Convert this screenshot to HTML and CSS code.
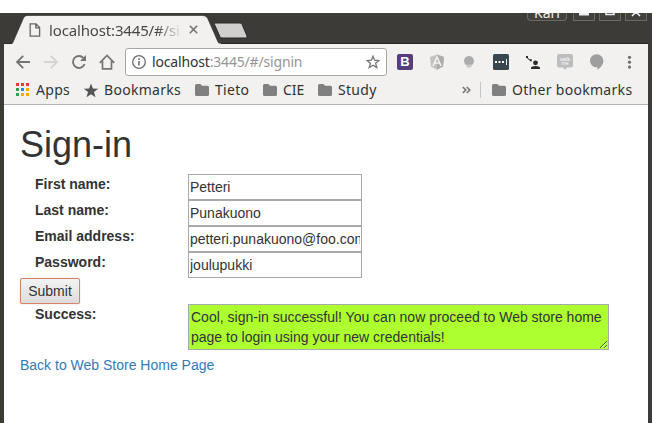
FILE: index.html
```html
<!DOCTYPE html>
<html lang="en">
<head>
<meta charset="utf-8">
<title>Sign-in</title>
<link rel="stylesheet" href="styles.css">
</head>
<body>
<div class="window">
  <header class="titlebar">
    <div class="tab">
      <svg class="tab-shape" width="218" height="30" viewBox="0 0 218 30"><path d="M1 29.500 12.500 3Q13.500 .5 16 .5H192Q195 .5 196.500 3L207 27Q208 29 210 29.500Z" fill="#f2f1ef" stroke="#282824" stroke-width=".6"/><path d="M1 29.500H210" stroke="#f2f1ef" stroke-width="2"/></svg>
      <div class="tab-body">
        <svg width="12" height="14" viewBox="0 0 12 14" fill="none" stroke="#666" stroke-width="1.300"><path d="M1.200.8H7L10.600 4.600V13.200H1.200ZM6.800.8V4.900H10.600"/></svg>
        <span class="tab-title">localhost:3445/#/si</span>
        <svg width="9" height="9" viewBox="0 0 9 9" stroke="#757575" stroke-width="1.600"><path d="M.8.8 8.200 8.200M8.200.8.8 8.200"/></svg>
      </div>
    </div>
    <svg class="newtab" width="35" height="17" viewBox="0 0 35 17"><path d="M2.500 1H27Q28.500 1 29 2.200L34 14Q34.600 16 33 16H9Q7.500 16 7 14.800L1.500 2.500Q1 1 2.500 1Z" fill="#d0cfcd" stroke="#292925"/></svg>
    <div class="controls">
      <span class="user"><span>Kari</span></span>
      <span class="ctl"><svg width="10" height="8"><path d="M0 1H10" stroke="#eee" stroke-width="3"/></svg></span>
      <span class="ctl"><svg width="10" height="8"><path d="M1-5H9V1.500H1Z" fill="none" stroke="#eee" stroke-width="1.600"/></svg></span>
      <span class="ctl"><svg width="10" height="8"><path d="M0-6 9 3M10-6 1 3" fill="none" stroke="#eee" stroke-width="1.600"/></svg></span>
    </div>
  </header>
  <nav class="toolbar">
    <span class="nav"><svg width="16" height="16" viewBox="0 0 16 16" fill="none" stroke="#757575" stroke-width="1.800"><path d="M15 8H2.500M8.200 1.800 2 8 8.200 14.200"/></svg></span>
    <span class="nav"><svg width="16" height="16" viewBox="0 0 16 16" fill="none" stroke="#d5d4d2" stroke-width="1.800"><path d="M1 8H13.500M7.800 1.800 14 8 7.800 14.200"/></svg></span>
    <span class="nav"><svg width="16" height="16" viewBox="0 0 16 16" fill="none" stroke="#757575" stroke-width="1.900"><path d="M13.600 10A6 6 0 1 1 12.300 3.800L13.500 5"/><path d="M15 1V7H9Z" fill="#757575" stroke="none"/></svg></span>
    <span class="nav"><svg width="16" height="16" viewBox="0 0 16 16" fill="none" stroke="#757575" stroke-width="1.700"><path d="M.8 8.800 8 1.500 15.200 8.800M3.500 7V14.800H12.500V7"/></svg></span>
    <div class="urlbar">
      <svg width="14" height="14" viewBox="0 0 14 14" fill="none" stroke="#6e6e6e"><circle cx="7" cy="7" r="6.300" stroke-width="1.300"/><path d="M7 6V10.500M7 3.300V5" stroke-width="1.600"/></svg>
      <span class="url">localhost<span class="dim">:3445/#/signin</span></span>
      <svg class="star" width="14" height="14" viewBox="0 0 14 14" fill="none" stroke="#757575" stroke-width="1.300"><path d="M7 1.200 8.600 5.200 13 5.500 9.600 8.200 10.800 12.600 7 10.200 3.200 12.600 4.400 8.200 1 5.500 5.400 5.200Z"/></svg>
    </div>
    <span class="ext"><span class="bootstrap">B</span></span>
    <span class="ext"><svg width="16" height="16" viewBox="0 0 16 16"><path d="M8 .5 15 3 14 12.500 8 15.700 2 12.500 1 3Z" fill="#c2c1c0"/><path d="M8 .5 15 3 14 12.500 8 15.700Z" fill="#adadab"/><path d="M4 12 8 3 12 12M5.700 9H10.300" fill="none" stroke="#f2f1ef" stroke-width="1.600"/></svg></span>
    <span class="ext"><svg width="16" height="16" viewBox="0 0 16 16"><circle cx="8" cy="7" r="5" fill="#acacac"/><path d="M5 10.500H11L10 13.500H6Z" fill="#c8c8c8"/></svg></span>
    <span class="ext"><svg width="16" height="16" viewBox="0 0 16 16"><rect width="16" height="16" rx="1.500" fill="#38474f"/><path d="M2 7H4V9H2ZM5.500 7H7.500V9H5.500ZM9 7H11V9H9ZM13 5H14V11H13Z" fill="#fff"/></svg></span>
    <span class="ext"><svg width="16" height="16" viewBox="0 0 16 16" fill="#292929"><circle cx="10.500" cy="8.800" r="2.400"/><path d="M6 15V13.700Q6.500 12 10.500 12T15 13.700V15Z"/><path d="M2 3Q2.800 5.500 5.500 6.200" fill="none" stroke="#292929" stroke-width="1"/><path d="M1 2H3V4H1ZM4.800 5.300H6.800V7.300H4.800Z"/></svg></span>
    <span class="ext"><svg width="16" height="16" viewBox="0 0 16 16"><path d="M2 0H14Q16 0 16 2V11.500Q16 13.500 14 13.500H10L8 16 6 13.500H2Q0 13.500 0 11.500V2Q0 0 2 0Z" fill="#bdbdbd"/><text class="walk" x="8" y="6.500">walk</text><text class="walk" x="8" y="11">me</text></svg></span>
    <span class="ext"><svg width="16" height="16" viewBox="0 0 16 16"><path d="M7.700.2A6.700 6.500 0 0 1 14.400 6.800C14.400 10.500 11.500 14 8.500 15.700V13.300H7.700A6.700 6.500 0 0 1 7.700.2Z" fill="#9e9e9e"/></svg></span>
    <span class="ext"><svg width="16" height="16" viewBox="0 0 16 16" fill="#6e6e6e"><circle cx="8.500" cy="3.300" r="1.600"/><circle cx="8.500" cy="8.200" r="1.600"/><circle cx="8.500" cy="13.100" r="1.600"/></svg></span>
  </nav>
  <nav class="bookmarks">
    <svg class="apps" width="14" height="14" viewBox="0 0 14 14"><path d="M0 0H3V3H0ZM5 0H8V3H5ZM10 0H13V3H10Z" fill="#ea3a35"/><path d="M0 5H3V8H0ZM0 10H3V13H0Z" fill="#2da04f"/><path d="M5 5H8V8H5Z" fill="#2684fc"/><path d="M10 5H13V8H10ZM5 10H8V13H5ZM10 10H13V13H10Z" fill="#fba90a"/></svg>
    <span class="bm bm-apps">Apps</span>
    <svg class="bm-star" width="16" height="15" viewBox="0 0 16 15"><path d="M8 .5 9.900 5.500 15.200 5.800 11 9.100 12.500 14.300 8 11.300 3.500 14.300 5 9.100.8 5.800 6.100 5.500Z" fill="#555"/></svg>
    <span class="bm bm-main">Bookmarks</span>
    <svg class="folder" width="14" height="12" viewBox="0 0 14 12"><path d="M1.500 0H5.500L7 1.800H12.500Q14 1.800 14 3.300V10.500Q14 12 12.500 12H1.500Q0 12 0 10.500V1.500Q0 0 1.500 0Z"/></svg>
    <span class="bm bm-tieto">Tieto</span>
    <svg class="folder" width="14" height="12" viewBox="0 0 14 12"><path d="M1.500 0H5.500L7 1.800H12.500Q14 1.800 14 3.300V10.500Q14 12 12.500 12H1.500Q0 12 0 10.500V1.500Q0 0 1.500 0Z"/></svg>
    <span class="bm bm-cie">CIE</span>
    <svg class="folder" width="14" height="12" viewBox="0 0 14 12"><path d="M1.500 0H5.500L7 1.800H12.500Q14 1.800 14 3.300V10.500Q14 12 12.500 12H1.500Q0 12 0 10.500V1.500Q0 0 1.500 0Z"/></svg>
    <span class="bm bm-study">Study</span>
    <svg class="more" width="9" height="8" viewBox="0 0 9 8" fill="none" stroke="#757575" stroke-width="1.600"><path d="M.8 1 3.800 4 .8 7M4.800 1 7.800 4 4.800 7"/></svg>
    <span class="divider"></span>
    <svg class="folder" width="14" height="12" viewBox="0 0 14 12"><path d="M1.500 0H5.500L7 1.800H12.500Q14 1.800 14 3.300V10.500Q14 12 12.500 12H1.500Q0 12 0 10.500V1.500Q0 0 1.500 0Z"/></svg>
    <span class="bm bm-other">Other bookmarks</span>
  </nav>
  <main class="page">
    <h1>Sign-in</h1>
    <form class="form">
      <div class="row"><label for="first">First name:</label><input id="first" value="Petteri"></div>
      <div class="row"><label for="last">Last name:</label><input id="last" value="Punakuono"></div>
      <div class="row"><label for="email">Email address:</label><input id="email" value="petteri.punakuono@foo.com"></div>
      <div class="row"><label for="password">Password:</label><input id="password" value="joulupukki"></div>
      <button type="button">Submit</button>
      <div class="row"><label for="success">Success:</label><textarea id="success">Cool, sign-in successful! You can now proceed to Web store home page to login using your new credentials!</textarea></div>
    </form>
    <a href="#">Back to Web Store Home Page</a>
  </main>
</div>
</body>
</html>
```
FILE: styles.css
```css
* { box-sizing: border-box; }
body { margin: 0; background: #fff; overflow: hidden; font: 14px/20px "Liberation Sans", Arial, sans-serif; color: #333; }
svg { display: block; flex: none; }
.window { margin-top: 13px; height: 410px; border: solid #3c3b37; border-width: 0 4px; display: flex; flex-direction: column; }
.titlebar { height: 31px; flex: none; display: flex; align-items: flex-start; background: #3c3b37; border-bottom: 1px solid #282824; }
.tab { display: grid; width: 210px; height: 30px; flex: none; margin: 2px 0 -2px 7px; }
.tab-shape, .tab-body { grid-area: 1 / 1; }
.tab-body { display: flex; align-items: center; height: 29px; padding-left: 18px; }
.tab-title { width: 131px; margin: 0 9px 0 8px; white-space: nowrap; overflow: hidden; font: 15px/20px "Noto Sans", sans-serif; letter-spacing: -.15px; background: linear-gradient(90deg, #444 82%, #d8d8d8 99%); background-clip: text; color: transparent; }
.newtab { margin: 9px 0 0 -8px; }
.controls { margin-left: auto; display: flex; gap: 4px; padding-right: 1px; }
.user, .ctl { height: 8px; border: 1px solid #6a6964; border-top: 0; border-radius: 0 0 4px 4px; background: #42413d; overflow: hidden; display: flex; justify-content: center; }
.user { width: 40px; margin-right: 2px; color: #eee; font: 14px/14px "Noto Sans", sans-serif; }
.user span { margin-top: -7px; }
.ctl { width: 22px; border-radius: 0; }
.toolbar { height: 35px; flex: none; padding-left: 5px; display: flex; align-items: center; background: #f2f1ef; }
.nav { width: 28px; display: flex; justify-content: center; }
.urlbar { width: 262px; height: 28px; flex: none; margin: 1px 2px 0 4px; padding: 0 6px; border: 1px solid #a8a8a6; border-radius: 3px; background: #fff; display: flex; align-items: center; }
.url { margin-left: 6px; white-space: nowrap; font: 14px/20px "Noto Sans", sans-serif; letter-spacing: -.17px; color: #333; }
.dim { color: #969696; }
.star { margin-left: auto; }
.ext { width: 32px; flex: none; display: flex; justify-content: center; }
.bootstrap { width: 16px; height: 16px; border-radius: 2px; background: #563d7c; color: #fff; font: bold 13px/16px "Liberation Sans", sans-serif; text-align: center; }
.walk { font: 5px "Liberation Sans", sans-serif; fill: #fff; text-anchor: middle; }
.bookmarks { height: 26px; flex: none; padding: 0 0 3px 12px; display: flex; align-items: center; background: #f2f1ef; border-bottom: 1px solid #b6b4b2; }
.bm { white-space: nowrap; font: 14px/20px "Noto Sans", sans-serif; letter-spacing: .3px; color: #333; flex: none; }
.folder { fill: #808080; margin-right: 6px; }
.apps { margin-right: 6px; }
.bm-star { margin-right: 5px; }
.bm-apps { width: 47px; }
.bm-main { width: 91px; }
.bm-tieto { width: 48px; }
.bm-cie { width: 35px; letter-spacing: -.1px; }
.bm-study { width: 124px; }
.divider { width: 1px; height: 16px; background: #c6c5c3; margin: 0 11px 0 9px; }
.page { flex: 1; min-height: 0; background: #fff; padding: 20px 16px 0; }
h1 { margin: 0 0 10px; font-size: 36px; line-height: 39px; font-weight: 500; }
.row { display: flex; padding-left: 15px; }
label { width: 153px; flex: none; font-weight: bold; line-height: 20px; }
input { width: 174px; height: 26px; padding: 1px; border: 1px solid #a9a9a9; outline: 0; font: inherit; color: inherit; }
button { display: block; width: 60px; height: 26px; padding: 0; border: 1px solid #d58268; border-radius: 2px; box-shadow: 0 0 1px 0 #d58268; background: linear-gradient(#f3f3f3, #ddd); font: inherit; color: inherit; }
textarea { width: 421px; height: 46px; padding: 2px; margin: 0; border: 1px solid #a9a9a9; background: #adff2f; font: inherit; color: inherit; overflow: hidden; resize: both; }
a { display: block; margin-top: 5px; color: #337ab7; text-decoration: none; }
```
